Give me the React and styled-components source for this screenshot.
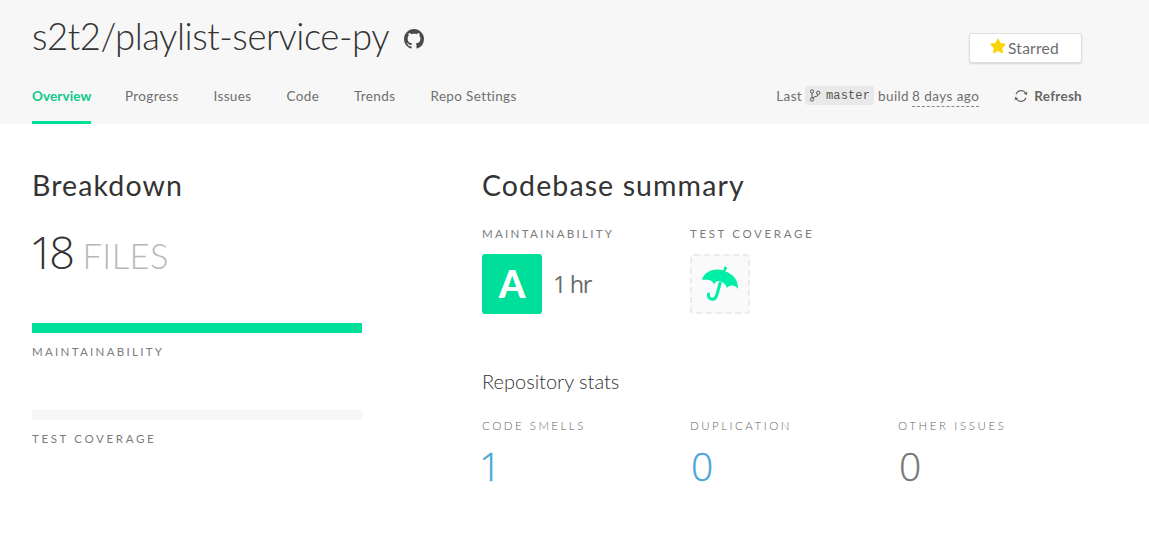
import React from "react";
import styled, { createGlobalStyle } from "styled-components";

const GlobalStyle = createGlobalStyle`
  * { box-sizing: border-box; }
  body {
    margin: 0;
    background: #fff;
    color: #333;
    font-family: Lato, "Open Sans", sans-serif;
    -webkit-font-smoothing: antialiased;
  }
  h1, h2, h3 { margin: 0; }
`;

const Page = styled.div`
  width: 1149px;
  height: 534px;
  overflow: hidden;
`;

const Header = styled.header`
  display: flex;
  justify-content: space-between;
  height: 124px;
  padding: 16px 67px 0 32px;
  background: #f7f7f7;
`;

const HeaderLeft = styled.div`
  display: flex;
  flex-direction: column;
  justify-content: space-between;
`;

const TitleRow = styled.div`
  display: flex;
  align-items: center;
  gap: 15px;
  height: 40px;
`;

const Title = styled.h1`
  width: 357px;
  font-size: 36.5px;
  line-height: 40px;
  font-weight: 300;
  letter-spacing: -0.46px;
  white-space: nowrap;
`;

const GithubIcon = styled.svg`
  width: 20px;
  height: 20px;
  margin-top: 5px;
  fill: #4a4a4a;
`;

const Nav = styled.nav`
  display: flex;
`;

const NavItem = styled.a`
  width: ${(p) => p.$width}px;
  height: 38px;
  margin-right: 34px;
  border-bottom: 3px solid ${(p) => (p.$active ? "#00df9a" : "transparent")};
  color: ${(p) => (p.$active ? "#0ec98b" : "#6f6f6f")};
  font-size: 13.5px;
  line-height: 21px;
  font-weight: ${(p) => (p.$active ? 700 : 400)};
  letter-spacing: ${(p) => (p.$active ? 0.1 : 0.36)}px;
  white-space: nowrap;
`;

const HeaderRight = styled.div`
  display: flex;
  flex-direction: column;
  align-items: flex-end;
  padding-top: 17px;
`;

const StarButton = styled.button`
  display: flex;
  align-items: center;
  justify-content: center;
  gap: 2px;
  width: 113px;
  height: 30px;
  padding: 0 2px 0 0;
  border: 1px solid #dedede;
  border-radius: 3px;
  background: #fff;
  box-shadow: 0 1px 2px rgba(0, 0, 0, 0.14);
  color: #6b6b6b;
  font: 400 15.5px/28px Lato, sans-serif;
  letter-spacing: 0.25px;

  svg {
    width: 16px;
    height: 16px;
    margin-bottom: 5px;
    fill: #fad505;
  }
`;

const BuildRow = styled.div`
  display: flex;
  height: 21px;
  margin-top: 23px;
  color: #6f6f6f;
  font-size: 13.5px;
  line-height: 21px;
  letter-spacing: 0.36px;
  white-space: nowrap;
`;

const Branch = styled.code`
  display: flex;
  align-items: center;
  gap: 5px;
  width: 69px;
  height: 19px;
  margin: 0 4px 0 3px;
  padding: 0 4px;
  border-radius: 3px;
  background: #e9e9e9;
  color: #555;
  font: 12px/19px "Liberation Mono", monospace;
  letter-spacing: 0.15px;

  svg {
    width: 12px;
    height: 13px;
    fill: none;
    stroke: #555;
  }

  span {
    padding-top: 1px;
  }
`;

const BuildTime = styled.span`
  height: 21px;
  margin-left: 3px;
  letter-spacing: 0.45px;
  border-bottom: 1px dashed #888;
`;

const Refresh = styled.a`
  display: flex;
  gap: 6px;
  margin-left: 35px;
  color: #666;
  font-weight: 700;
  letter-spacing: 0.28px;

  svg {
    width: 14px;
    height: 14px;
    margin-top: 3px;
    fill: none;
    stroke: #666;
  }
`;

const Main = styled.main`
  display: grid;
  grid-template-columns: 330px 1fr;
  column-gap: 120px;
  padding: 44px 67px 0 32px;
`;

const Column = styled.section``;

const Heading = styled.h2`
  font-size: 28.5px;
  line-height: 34px;
  font-weight: 400;
  letter-spacing: 1.1px;
  white-space: nowrap;
`;

const FileCount = styled.div`
  display: flex;
  align-items: baseline;
  gap: 13px;
  height: 60px;
  margin: 20px 0 0 -3px;
  font: 300 45px/60px "Open Sans", sans-serif;
  letter-spacing: -5.5px;

  small {
    color: #b8b8b8;
    font: 300 34.5px/60px Lato, sans-serif;
    letter-spacing: 0.4px;
  }
`;

const Meter = styled.div`
  height: 10px;
  margin-top: ${(p) => p.$gap}px;
  background: ${(p) => (p.$filled ? "#00df9a" : "#f7f7f7")};
`;

const Label = styled.div`
  height: 16px;
  margin-top: ${(p) => p.$gap || 0}px;
  color: ${(p) => (p.$light ? "#666" : "#7c7c7c")};
  font-size: 11.5px;
  line-height: 16px;
  font-weight: ${(p) => (p.$light ? 300 : 400)};
  letter-spacing: ${(p) => p.$tracking || 2.3}px;
  text-transform: uppercase;
  white-space: nowrap;
`;

const Cells = styled.div`
  display: grid;
  grid-template-columns: repeat(3, 208px);
  margin-top: ${(p) => p.$gap}px;
`;

const Cell = styled.div``;

const Rating = styled.div`
  display: flex;
  align-items: center;
  gap: 11px;
  height: 60px;
  margin-top: 12px;
  color: #6b6b6b;
  font-size: 23.5px;
  font-family: "Open Sans", sans-serif;
  letter-spacing: -1.4px;
`;

const Grade = styled.div`
  width: 60px;
  height: 60px;
  border-radius: 3px;
  background: #00df9a;
  color: #fff;
  font: 900 38px/58px Lato, sans-serif;
  letter-spacing: 0;
  text-align: center;
`;

const CoverageBox = styled.div`
  display: flex;
  align-items: center;
  justify-content: center;
  width: 60px;
  height: 60px;
  border: 2px dashed #ebebeb;
  border-radius: 4px;
  background: #fafafa;

  svg {
    width: 40px;
    height: 40px;
  }
`;

const SubHeading = styled.h3`
  height: 26px;
  margin-top: 55px;
  font-size: 20px;
  line-height: 25px;
  font-weight: 300;
`;

const Stat = styled.div`
  height: 48px;
  margin: 8px 0 0 ${(p) => p.$shift || 0}px;
  color: ${(p) => (p.$link ? "#45a6d8" : "#777")};
  font: 300 39px/48px "Open Sans", sans-serif;
  -webkit-text-stroke: 0.3px currentColor;
`;

const tabs = [
  { name: "Overview", width: 59, active: true },
  { name: "Progress", width: 54.5 },
  { name: "Issues", width: 39 },
  { name: "Code", width: 33.5 },
  { name: "Trends", width: 42.5 },
  { name: "Repo Settings", width: 87 },
];

const stats = [
  { name: "Code smells", value: 1, link: true, tracking: 2.5, shift: -3 },
  { name: "Duplication", value: 0, link: true, tracking: 2.5, shift: 1 },
  { name: "Other issues", value: 0, tracking: 2.6, shift: 1 },
];

export default function App() {
  return (
    <Page>
      <GlobalStyle />
      <Header>
        <HeaderLeft>
          <TitleRow>
            <Title>s2t2/playlist-service-py</Title>
            <GithubIcon viewBox="0 0 16 16">
              <path d="M8 0C3.58 0 0 3.58 0 8c0 3.54 2.29 6.53 5.47 7.59.4.07.55-.17.55-.38 0-.19-.01-.82-.01-1.49-2.01.37-2.53-.49-2.69-.94-.09-.23-.48-.94-.82-1.13-.28-.15-.68-.52-.01-.53.63-.01 1.08.58 1.23.82.72 1.21 1.87.87 2.33.66.07-.52.28-.87.51-1.07-1.78-.2-3.64-.89-3.64-3.95 0-.87.31-1.59.82-2.15-.08-.2-.36-1.02.08-2.12 0 0 .67-.21 2.2.82.64-.18 1.32-.27 2-.27s1.36.09 2 .27c1.53-1.04 2.2-.82 2.2-.82.44 1.1.16 1.92.08 2.12.51.56.82 1.27.82 2.15 0 3.07-1.87 3.75-3.65 3.95.29.25.54.73.54 1.48 0 1.07-.01 1.93-.01 2.2 0 .21.15.46.55.38A8.01 8.01 0 0 0 16 8c0-4.42-3.58-8-8-8z" />
            </GithubIcon>
          </TitleRow>
          <Nav>
            {tabs.map((t) => (
              <NavItem key={t.name} $width={t.width} $active={t.active}>
                {t.name}
              </NavItem>
            ))}
          </Nav>
        </HeaderLeft>
        <HeaderRight>
          <StarButton>
            <svg viewBox="0 0 16 16">
              <path d="M8 .8c.4 0 .7.2.9.6l1.7 3.7 4 .5c.9.1 1.2 1 .6 1.6l-3 2.8.8 4c.1.8-.7 1.4-1.4 1L8 13l-3.6 2c-.7.4-1.5-.2-1.4-1l.8-4-3-2.8C.2 6.6.5 5.7 1.4 5.6l4-.5 1.7-3.7c.2-.4.5-.6.9-.6z" />
            </svg>
            Starred
          </StarButton>
          <BuildRow>
            <span>Last</span>
            <Branch>
              <svg viewBox="0 0 12 13">
                <circle cx="3" cy="2.5" r="1.7" />
                <circle cx="3" cy="10.5" r="1.7" />
                <circle cx="9.3" cy="3.8" r="1.7" />
                <path d="M3 4.2v4.6M9.3 5.5C9.3 8 5.5 7.2 3.4 9" />
              </svg>
              <span>master</span>
            </Branch>
            <span>build</span>
            <BuildTime>8 days ago</BuildTime>
            <Refresh>
              <svg viewBox="0 0 14 14">
                <path d="M2 5.2A5.5 5.5 0 0 1 11.8 4.2M12 8.8A5.5 5.5 0 0 1 2.2 9.8" strokeWidth="1.1" />
                <path d="M13.4 2.7l-.6 3.5-3-1.6zM.6 11.3l.6-3.5 3 1.6z" fill="#666" stroke="none" />
              </svg>
              Refresh
            </Refresh>
          </BuildRow>
        </HeaderRight>
      </Header>
      <Main>
        <Column>
          <Heading>Breakdown</Heading>
          <FileCount>
            18 <small>FILES</small>
          </FileCount>
          <Meter $gap={41} $filled />
          <Label $gap={11}>Maintainability</Label>
          <Meter $gap={50} />
          <Label $gap={11} $tracking={2.65}>Test coverage</Label>
        </Column>
        <Column>
          <Heading>Codebase summary</Heading>
          <Cells $gap={24}>
            <Cell>
              <Label>Maintainability</Label>
              <Rating>
                <Grade>A</Grade>
                1 hr
              </Rating>
            </Cell>
            <Cell>
              <Label $tracking={2.65}>Test coverage</Label>
              <Rating>
                <CoverageBox>
                  <svg viewBox="0 0 40 40">
                    <path
                      d="M2 15.500C4 9 10 5.500 17 5.400c2.500 0 4.500.3 6.500.9l.4-1c-.5-1.300.2-2.700 1.500-2.800 1.200 0 1.900 1.100 1.500 2.300-.3.900-.9 1.400-1.400 1.600l-.3.800C33 10 38.500 16 38 25c-1.500-2.500-4-3.700-6.500-3.500-2 .1-3.500 1-4.500 2.700-1-3.500-3.300-6-7-7-3-.5-4.500.4-6 3.300-1-2.500-2.500-4-5-4.500-2.700-.6-5.300 0-7-.5z"
                      fill="#00efa6"
                    />
                    <path d="M20.200 19l-3.400 12c-.9 3-3 4.600-5.500 4-2.400-.6-3.300-2.600-2.700-5" fill="none" stroke="#00efa6" strokeWidth="3" strokeLinecap="round" />
                  </svg>
                </CoverageBox>
              </Rating>
            </Cell>
          </Cells>
          <SubHeading>Repository stats</SubHeading>
          <Cells $gap={23}>
            {stats.map((s) => (
              <Cell key={s.name}>
                <Label $light $tracking={s.tracking}>{s.name}</Label>
                <Stat $link={s.link} $shift={s.shift}>{s.value}</Stat>
              </Cell>
            ))}
          </Cells>
        </Column>
      </Main>
    </Page>
  );
}
